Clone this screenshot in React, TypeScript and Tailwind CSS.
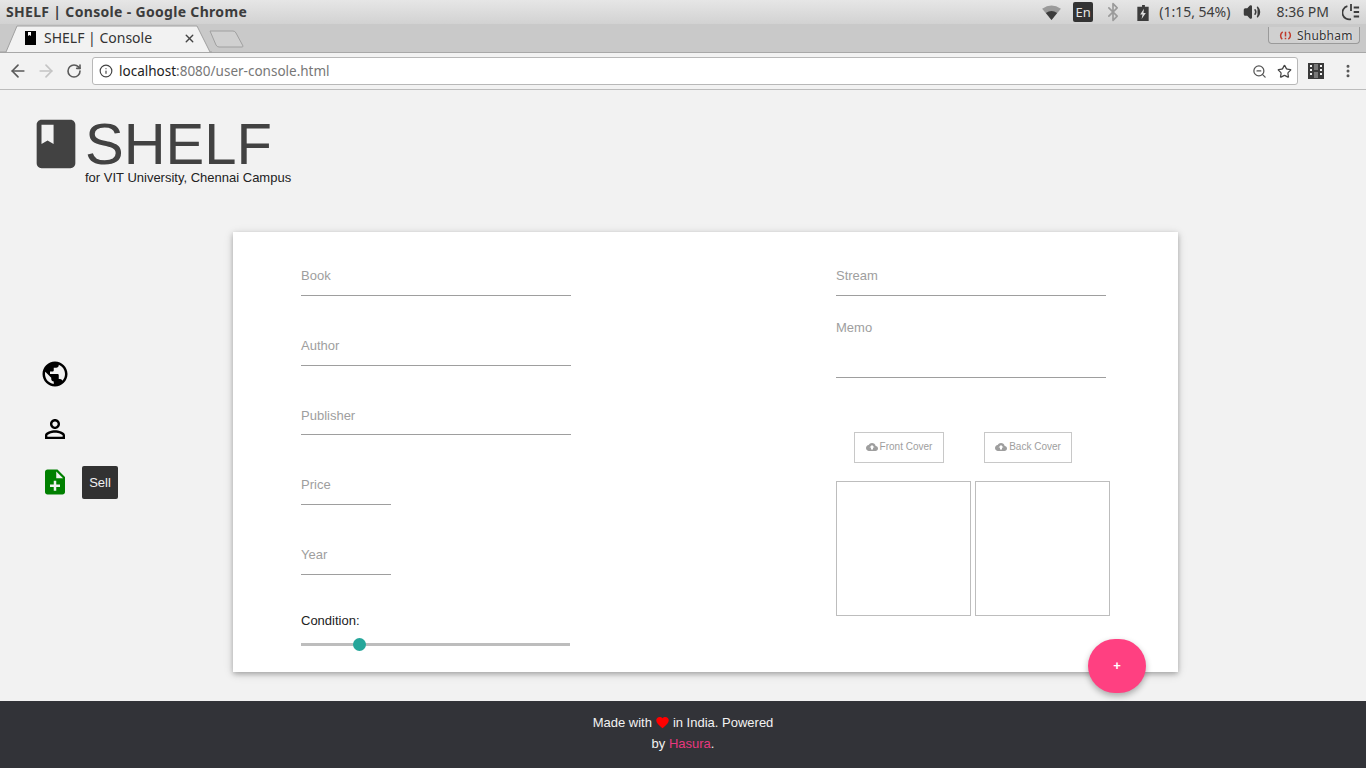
import { ArrowLeft, ArrowRight, RotateCw, Info, ZoomOut, Star, X, MoreVertical, Bluetooth, Volume2 } from 'lucide-react';

const leftFields = [
  { label: 'Book', h: 'h-[64px]', w: 'w-[270px]', mb: 'mb-[12px]' },
  { label: 'Author', h: 'h-[70px]', w: 'w-[270px]', mb: 'mb-[12px]' },
  { label: 'Publisher', h: 'h-[69px]', w: 'w-[270px]', mb: 'mb-[11px]' },
  { label: 'Price', h: 'h-[70px]', w: 'w-[90px]', mb: 'mb-[12px]' },
  { label: 'Year', h: 'h-[70px]', w: 'w-[90px]', mb: 'mb-[12px]' },
];

function Field({ label, h, w, mb }: { label: string; h: string; w: string; mb: string }) {
  return (
    <div className={`${h} ${w} flex flex-col justify-end border-b border-[#9e9e9e]`}>
      <span className={`text-[13px] leading-[15px] text-[#9e9e9e] ${mb}`}>{label}</span>
    </div>
  );
}

function CoverButton({ label, w }: { label: string; w: string }) {
  return (
    <div className={`${w} h-[31px] pb-[2px] border border-[#c8c8c8] flex items-center justify-center gap-[2px] text-[10px] text-[#9e9e9e]`}>
      <svg viewBox="0 0 24 24" className="w-[12px] h-[12px]" fill="#9e9e9e">
        <path d="M19.35 10.04C18.67 6.59 15.64 4 12 4 9.11 4 6.6 5.64 5.35 8.04 2.34 8.36 0 10.91 0 14c0 3.31 2.69 6 6 6h13c2.76 0 5-2.24 5-5 0-2.64-2.05-4.78-4.65-4.96zM14 13v4h-4v-4H7l5-5 5 5h-3z" />
      </svg>
      <span>{label}</span>
    </div>
  );
}

function BrowserChrome() {
  return (
    <div className="shrink-0" style={{ fontFamily: '"Noto Sans", "Open Sans", sans-serif' }}>
      {/* title bar */}
      <div className="h-[24px] flex items-center justify-between pl-[6px] pr-[6px] bg-gradient-to-b from-[#e6e6e6] to-[#d2d2d2] text-[#3c3c3c]">
        <span className="text-[14px] font-bold leading-none whitespace-nowrap tracking-[0.32px]">SHELF | Console - Google Chrome</span>
        <div className="flex items-center text-[14px] leading-none">
          <svg viewBox="0 0 20 16" className="w-[19px] h-[15px] mr-[12px]">
            <path d="M0 4 Q10 -3 20 4 L10 16z" fill="#9a9a9a" />
            <path d="M4 8.500 Q10 4.500 16 8.500 L10 16z" fill="#3c3c3c" />
          </svg>
          <span className="w-[20px] h-[20px] bg-[#333] text-[#e6e6e6] rounded-[2px] flex items-center justify-center text-[13px] mr-[10px]">En</span>
          <Bluetooth className="w-[20px] h-[20px] text-[#9a9a9a] mr-[14px]" strokeWidth={2} />
          <svg viewBox="0 0 12 18" className="w-[12px] h-[17px] mr-[10px]">
            <path d="M3 3h2V1h3v2h4v15H0V3z" fill="#3c3c3c" />
            <path d="M7 5 3 11h2.500L4.500 16 9 9.500H6.500z" fill="#e0e0e0" />
          </svg>
          <span className="mr-[12px] whitespace-nowrap">(1:15, 54%)</span>
          <Volume2 className="w-[20px] h-[18px] text-[#3c3c3c] mr-[14px]" fill="#3c3c3c" strokeWidth={2} />
          <span className="mr-[13px] whitespace-nowrap">8:36 PM</span>
          <svg viewBox="0 0 20 20" className="w-[18px] h-[18px]" fill="none" stroke="#3c3c3c" strokeWidth="2">
            <path d="M6 3.500A7.500 7.500 0 0 0 10 18" />
            <path d="M10 1v8M13 5h6M13 10h6M13 15h6" />
          </svg>
        </div>
      </div>
      {/* tab strip */}
      <div className="h-[29px] bg-[#c9c9c9] border-b border-[#a8a8a8] flex items-end justify-between relative">
        <div className="flex items-end">
          <svg viewBox="0 0 212 28" className="w-[212px] h-[28px] absolute left-0 bottom-[-1px]">
            <path d="M0 27h6L17 1h180l13 26h2" fill="#f2f2f2" stroke="#a0a0a0" />
          </svg>
          <svg viewBox="0 0 36 18" className="w-[36px] h-[18px] absolute left-[209px] bottom-[4px]">
            <path d="M1 1h23q2 0 3 2l7 13q0 1-1 1H10q-2 0-3-2z" fill="#d0d0d0" stroke="#a0a0a0" />
          </svg>
          <div className="relative flex items-center h-[28px] pl-[25px] text-[14px] text-[#333]">
            <svg viewBox="0 0 11 14" className="w-[11px] h-[14px] mr-[8px]">
              <path d="M0 0h11v14H0z" fill="#000" />
              <path d="M3 1h3v4L4.500 4 3 5z" fill="#fff" />
            </svg>
            <span className="leading-none whitespace-nowrap">SHELF | Console</span>
            <X className="w-[13px] h-[13px] ml-[31px] text-[#444]" strokeWidth={2.5} />
          </div>
        </div>
        <div className="w-[92px] h-[17px] mr-[6px] mb-[8px] pt-[1px] rounded-b-[4px] border border-t-0 border-[#9a9a9a] bg-[#d0d0d0] flex items-center gap-[5px] pl-[10px] text-[12px] leading-none text-[#333] [text-shadow:0_0_2px_#fff]">
          <svg viewBox="0 0 14 14" className="w-[13px] h-[13px] shrink-0" fill="none" stroke="#c0392b" strokeWidth="1.600">
            <path d="M3.500 11A5 5 0 0 1 4 3M10.500 3A5 5 0 0 1 10 11" />
            <path d="M7 3v5M7 9.500v1.500" />
          </svg>
          <span className="tracking-[0.2px]">Shubham</span>
        </div>
      </div>
      {/* toolbar */}
      <div className="h-[37px] bg-[#f2f2f2] border-b border-[#bcbcbc] flex items-center pl-[8px] pr-[10px]">
        <ArrowLeft className="w-[20px] h-[20px] text-[#5a5a5a]" strokeWidth={2} />
        <ArrowRight className="w-[20px] h-[20px] ml-[8px] text-[#c4c4c4]" strokeWidth={2} />
        <RotateCw className="w-[16px] h-[16px] ml-[10px] text-[#5a5a5a]" strokeWidth={2.4} />
        <div className="ml-[10px] h-[28px] w-[1206px] bg-white border border-[#b8b8b8] rounded-[3px] flex items-center pl-[6px] pr-[4px] text-[13.500px]">
          <Info className="w-[14px] h-[14px] text-[#444] mr-[6px]" strokeWidth={2} />
          <span className="text-[#222]">localhost</span>
          <span className="text-[#777]">:8080/user-console.html</span>
          <ZoomOut className="w-[15px] h-[15px] ml-auto mr-[10px] text-[#555]" strokeWidth={2} />
          <Star className="w-[15px] h-[15px] mr-[1px] text-[#444]" strokeWidth={2} />
        </div>
        <svg viewBox="0 0 16 16" className="w-[16px] h-[16px] ml-[10px]">
          <path d="M0 0h16v16H0z" fill="#3a3a3a" />
          <path d="M2 2h2v2H2zM2 6h2v2H2zM2 10h2v2H2zM12 2h2v2h-2zM12 6h2v2h-2zM12 10h2v2h-2z" fill="#f2f2f2" />
          <path d="M6 1h4v6H6zM6 9h4v6H6z" fill="#777" />
        </svg>
        <MoreVertical className="w-[16px] h-[16px] ml-[16px] text-[#555]" strokeWidth={2.5} />
      </div>
    </div>
  );
}

export default function App() {
  return (
    <div className="h-screen w-full flex flex-col overflow-hidden bg-[#f2f2f2]" style={{ fontFamily: '"Liberation Sans", Arial, sans-serif' }}>
      <BrowserChrome />

      <main className="flex-1 min-h-0 bg-[#f2f2f2]">
        {/* logo */}
        <div className="h-[142px] pl-[27px] pt-[25px] flex items-start">
          <svg viewBox="0 0 24 24" className="w-[58px] h-[58px]" fill="#424242">
            <path d="M18 2H6c-1.100 0-2 .9-2 2v16c0 1.100.9 2 2 2h12c1.100 0 2-.9 2-2V4c0-1.100-.9-2-2-2zM6 4h5v8l-2.500-1.500L6 12V4z" />
          </svg>
          <div className="pt-[3px]">
            <div className="text-[58px] leading-[52px] text-[#424242]">SHELF</div>
            <div className="text-[13px] leading-[15px] text-[#222]">for VIT University, Chennai Campus</div>
          </div>
        </div>

        <div className="flex">
          {/* side nav */}
          <div className="w-[233px] shrink-0 pl-[40px] pt-[127px] flex flex-col gap-[25px] relative">
            <svg viewBox="0 0 24 24" className="w-[30px] h-[30px]" fill="#000">
              <path d="M12 2C6.480 2 2 6.480 2 12s4.480 10 10 10 10-4.480 10-10S17.520 2 12 2zm-1 17.930c-3.950-.49-7-3.850-7-7.930 0-.62.08-1.210.21-1.790L9 15v1c0 1.100.9 2 2 2v1.930zm6.900-2.540c-.26-.81-1-1.390-1.900-1.390h-1v-3c0-.55-.45-1-1-1H8v-2h2c.55 0 1-.45 1-1V7h2c1.100 0 2-.9 2-2v-.41c2.930 1.190 5 4.060 5 7.410 0 2.080-.8 3.970-2.100 5.390z" />
            </svg>
            <svg viewBox="0 0 24 24" className="w-[30px] h-[30px]" fill="#000">
              <path d="M12 5.900c1.160 0 2.100.94 2.100 2.100s-.94 2.100-2.100 2.100S9.900 9.160 9.900 8s.94-2.100 2.100-2.100m0 9c2.970 0 6.100 1.460 6.100 2.100v1.100H5.900V17c0-.64 3.130-2.100 6.100-2.100M12 4C9.790 4 8 5.790 8 8s1.790 4 4 4 4-1.790 4-4-1.790-4-4-4zm0 9c-2.670 0-8 1.340-8 4v3h16v-3c0-2.660-5.330-4-8-4z" />
            </svg>
            <svg viewBox="0 0 24 24" className="w-[30px] h-[30px] -mt-[2px]" fill="#008000">
              <path d="M14 2H6c-1.100 0-1.990.9-1.990 2L4 20c0 1.100.89 2 1.990 2H18c1.100 0 2-.9 2-2V8l-6-6zm2 14h-3v3h-2v-3H8v-2h3v-3h2v3h3v2zm-3-7V3.500L18.500 9H13z" />
            </svg>
            <div className="absolute left-[82px] top-[234px] w-[36px] h-[33px] bg-[#323232] rounded-[2px] text-[#f0f0f0] text-[13px] flex items-center justify-center">Sell</div>
          </div>

          {/* form card */}
          <div className="w-[945px] h-[440px] shrink-0 bg-white relative flex pl-[68px] shadow-[0_2px_5px_rgba(0,0,0,0.26),0_2px_10px_rgba(0,0,0,0.12)]">
            <div className="w-[535px] shrink-0">
              {leftFields.map((f) => (
                <Field key={f.label} label={f.label} h={f.h} w={f.w} mb={f.mb} />
              ))}
              <div className="text-[13px] leading-[15px] text-[#222] mt-[38px]">Condition:</div>
              <div className="w-[269px] h-[3px] bg-[#bdbdbd] mt-[15px] relative">
                <div className="absolute left-[52px] -top-[5px] w-[13px] h-[13px] rounded-full bg-[#26a69a]" />
              </div>
            </div>
            <div className="flex-1">
              <Field label="Stream" h="h-[64px]" w="w-[270px]" mb="mb-[12px]" />
              <div className="w-[270px] h-[82px] border-b border-[#9e9e9e] pt-[24px] text-[13px] leading-[15px] text-[#9e9e9e]">Memo</div>
              <div className="flex mt-[54px] pl-[18px] gap-[40px]">
                <CoverButton label="Front Cover" w="w-[90px]" />
                <CoverButton label="Back Cover" w="w-[88px]" />
              </div>
              <div className="flex gap-[4px] mt-[18px]">
                <div className="w-[135px] h-[135px] border border-[#bdbdbd]" />
                <div className="w-[135px] h-[135px] border border-[#bdbdbd]" />
              </div>
            </div>
            <div className="absolute right-[32px] -bottom-[21px] w-[58px] h-[54px] rounded-full bg-[#ff4081] text-white text-[13px] font-bold flex items-center justify-center shadow-[0_3px_6px_rgba(0,0,0,0.3)]">+</div>
          </div>
        </div>
      </main>

      <footer className="h-[67px] shrink-0 bg-[#323338] text-[#f2f2f2] text-[13px] leading-[21px] flex flex-col items-center pt-[11px]">
        <div className="flex items-center">
          Made with
          <svg viewBox="0 0 24 24" className="w-[15px] h-[15px] mx-[3px]" fill="#ff0000">
            <path d="M12 21.350l-1.450-1.320C5.400 15.360 2 12.280 2 8.500 2 5.420 4.420 3 7.500 3c1.740 0 3.410.81 4.500 2.090C13.090 3.810 14.760 3 16.500 3 19.580 3 22 5.420 22 8.500c0 3.780-3.400 6.860-8.550 11.540L12 21.350z" />
          </svg>
          in India. Powered
        </div>
        <div>
          by <span className="text-[#e8387f]">Hasura</span>.
        </div>
      </footer>
    </div>
  );
}
